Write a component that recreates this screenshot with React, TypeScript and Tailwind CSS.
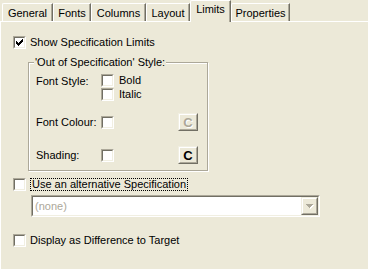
import React from 'react';

const tabs = [
  { label: 'General', w: 'w-[51px]' },
  { label: 'Fonts', w: 'w-[38px]' },
  { label: 'Columns', w: 'w-[55px]' },
  { label: 'Layout', w: 'w-[44px]' },
  { label: 'Limits', w: 'w-[41px]', active: true },
  { label: 'Properties', w: 'w-[59px]' },
];

const checkPixels = [
  [6, 0], [5, 1], [6, 1], [0, 2], [4, 2], [5, 2], [6, 2],
  [0, 3], [1, 3], [3, 3], [4, 3], [5, 3],
  [0, 4], [1, 4], [2, 4], [3, 4], [4, 4],
  [1, 5], [2, 5], [3, 5], [2, 6],
];

function CheckBox({ checked = false }: { checked?: boolean }) {
  return (
    <div className="w-[13px] h-[13px] shrink-0 border border-t-[#ACA899] border-l-[#ACA899] border-b-white border-r-white">
      <div className="w-full h-full border border-t-[#716F64] border-l-[#716F64] border-b-[#F1EFE2] border-r-[#F1EFE2] bg-white flex items-center justify-center">
        {checked && (
          <svg width="7" height="7" viewBox="0 0 7 7" shapeRendering="crispEdges">
            {checkPixels.map(([x, y]) => (
              <rect key={`${x}-${y}`} x={x} y={y} width="1" height="1" fill="#000" />
            ))}
          </svg>
        )}
      </div>
    </div>
  );
}

function ColourButton({ disabled = false }: { disabled?: boolean }) {
  return (
    <div className="w-[20px] h-[18px] shrink-0 border border-t-[#F1EFE2] border-l-[#F1EFE2] border-b-[#716F64] border-r-[#716F64]">
      <div className="w-full h-full border border-t-white border-l-white border-b-[#ACA899] border-r-[#ACA899] flex items-center justify-center">
        {disabled ? (
          <span className="font-bold text-[13px] leading-none text-[#ACA899] [text-shadow:1px_1px_0_#fff]">C</span>
        ) : (
          <span className="font-bold text-[13px] leading-none text-black">C</span>
        )}
      </div>
    </div>
  );
}

export default function App() {
  return (
    <div className="w-[368px] h-[269px] bg-[#ECE9D8] overflow-hidden font-['Liberation_Sans',Arial,sans-serif] text-[11px] text-black leading-[13px]">
      {/* Tabs */}
      <div className="flex items-end h-[21px] pl-[2px]">
        {tabs.map((t) =>
          t.active ? (
            <div
              key={t.label}
              className={`${t.w} h-[22px] relative top-[1px] z-10 bg-[#ECE9D8] border-l border-t border-white rounded-tl-[2px] border-r border-r-[#716F64] shadow-[inset_-1px_0_0_#ACA899] flex items-center justify-center pb-[4px]`}
            >
              {t.label}
            </div>
          ) : (
            <div
              key={t.label}
              className={`${t.w} h-[18px] border-l border-t border-white rounded-tl-[2px] border-r border-r-[#716F64] shadow-[inset_-1px_0_0_#ACA899] flex items-center justify-center pt-[1px]`}
            >
              {t.label}
            </div>
          )
        )}
      </div>

      {/* Panel */}
      <div className="h-[248px] border-t border-l border-white">
        <div className="flex items-center gap-[4px] mt-[14px] ml-[12px]">
          <CheckBox checked />
          <span>Show Specification Limits</span>
        </div>

        {/* Group box */}
        <div className="relative mt-[13px] ml-[27px] w-[180px] h-[109px] border border-[#ACA899] shadow-[1px_1px_0_#fff,inset_1px_1px_0_#fff]">
          <span className="absolute -top-[7px] left-[5px] px-[1px] bg-[#ECE9D8] whitespace-nowrap">
            'Out of Specification' Style:
          </span>

          <div className="flex mt-[11px] ml-[7px]">
            <span className="w-[65px] mt-[1px]">Font Style:</span>
            <div className="flex flex-col gap-[1px]">
              <div className="flex items-center gap-[5px]">
                <CheckBox />
                <span>Bold</span>
              </div>
              <div className="flex items-center gap-[5px]">
                <CheckBox />
                <span>Italic</span>
              </div>
            </div>
          </div>

          <div className="flex items-center mt-[12px] ml-[7px] h-[18px]">
            <span className="w-[65px]">Font Colour:</span>
            <CheckBox />
            <div className="ml-[64px]">
              <ColourButton disabled />
            </div>
          </div>

          <div className="flex items-center mt-[15px] ml-[7px] h-[18px]">
            <span className="w-[65px]">Shading:</span>
            <CheckBox />
            <div className="ml-[64px]">
              <ColourButton />
            </div>
          </div>
        </div>

        <div className="flex items-center gap-[4px] mt-[7px] ml-[12px]">
          <CheckBox />
          <span className="border border-dotted border-black h-[13px] px-[1px] leading-[11px]">
            Use an alternative Specification
          </span>
        </div>

        {/* Combo box */}
        <div className="mt-[4px] ml-[30px] w-[289px] h-[22px] border border-t-[#ACA899] border-l-[#ACA899] border-b-white border-r-white">
          <div className="w-full h-full border border-t-[#716F64] border-l-[#716F64] border-b-[#F1EFE2] border-r-[#F1EFE2] bg-white flex items-center">
            <span className="flex-1 pl-[2px] text-[#ACA899]">(none)</span>
            <div className="w-[17px] h-[18px] border border-t-[#F1EFE2] border-l-[#F1EFE2] border-b-[#716F64] border-r-[#716F64] bg-[#ECE9D8]">
              <div className="w-full h-full border border-t-white border-l-white border-b-[#ACA899] border-r-[#ACA899] flex items-center justify-center">
                <svg width="8" height="5" viewBox="0 0 8 5" shapeRendering="crispEdges">
                  <path d="M1 1h7L4.5 5z" fill="#fff" />
                  <path d="M0 0h7L3.5 4z" fill="#ACA899" />
                </svg>
              </div>
            </div>
          </div>
        </div>

        <div className="flex items-center gap-[4px] mt-[17px] ml-[12px]">
          <CheckBox />
          <span>Display as Difference to Target</span>
        </div>
      </div>
    </div>
  );
}
